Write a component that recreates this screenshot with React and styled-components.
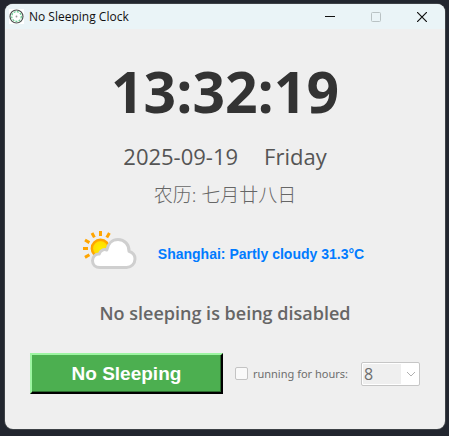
import React, { useState } from "react";
import styled, { createGlobalStyle } from "styled-components";

const ui = `"Open Sans", "Noto Sans", "Noto Sans CJK SC", sans-serif`;
const arial = `"Liberation Sans", Arial, sans-serif`;

const GlobalStyle = createGlobalStyle`
  *, *::before, *::after { box-sizing: border-box; }
  body { margin: 0; background: #22262f; font-family: ${ui}; }
`;

const Desktop = styled.div`
  min-height: 100vh;
  display: flex;
  padding: 4px 4px 7px 5px;
`;

const Window = styled.main`
  flex: 1;
  display: flex;
  flex-direction: column;
  overflow: hidden;
  border-radius: 8px;
  background: #efefef;
  box-shadow: 0 0 0 1px #3d4146;
`;

const TitleBar = styled.header`
  display: flex;
  align-items: center;
  height: 25px;
  padding-left: 4px;
  background: #eaf4f7;
`;

const Title = styled.h1`
  flex: 1;
  margin: 0 0 0 5px;
  font: 400 12px/16px ${ui};
  color: #111;
`;

const WindowButton = styled.button`
  display: grid;
  place-items: center;
  width: 46px;
  height: 24px;
  padding: 0;
  border: 0;
  background: transparent;
  color: #111;
  &:disabled { color: #b9c2c4; }
`;

const Content = styled.div`
  flex: 1;
  display: flex;
  flex-direction: column;
  align-items: center;
  padding: 22px 25px 0;
`;

const Time = styled.time`
  font: 700 57px/80px ${ui};
  color: #333;
`;

const DateLine = styled.div`
  display: flex;
  gap: 26px;
  margin-top: 9px;
  font-size: 22px;
  line-height: 32px;
  color: #555;
`;

const Lunar = styled.div`
  margin-top: 5px;
  font: 300 19px/36px "Noto Sans", "Noto Sans CJK SC", sans-serif;
  color: #666;
`;

const Weather = styled.div`
  display: flex;
  align-items: center;
  gap: 20px;
  margin-top: 17px;
`;

const WeatherText = styled.span`
  padding: 6px 4px 0 0;
  font: 700 14px/20px ${arial};
  color: #007bff;
`;

const Status = styled.p`
  margin: 27px 0 0;
  font: 600 18px/28px ${ui};
  color: #666;
`;

const Controls = styled.div`
  align-self: stretch;
  display: flex;
  align-items: center;
  margin-top: 26px;
`;

const SleepButton = styled.button`
  flex: 1;
  height: 41px;
  padding: 0;
  border: 2px solid;
  border-color: #9df5a2 #000 #000 #9df5a2;
  background: #4caf50;
  box-shadow: inset -1px -1px 0 #2b6b2e;
  font: 700 19px/24px ${arial};
  color: #fff;
`;

const CheckLabel = styled.label`
  display: flex;
  align-items: center;
  gap: 5px;
  margin-left: 12px;
  font: 400 11px/16px "Noto Sans", sans-serif;
  white-space: nowrap;
  color: #6d6d6d;
`;

const CheckBox = styled.input`
  appearance: none;
  width: 13px;
  height: 13px;
  margin: 0;
  border: 1px solid #c3c3c3;
  border-radius: 2px;
  background: #f9f9f9;
  &:checked { background: #007bff; }
`;

const SelectBox = styled.div`
  position: relative;
  width: 59px;
  margin-left: 13px;
`;

const HourSelect = styled.select`
  appearance: none;
  display: block;
  width: 100%;
  height: 24px;
  padding: 0 20px 0 2px;
  border: 1px solid #c6c6c6;
  border-radius: 2px;
  background: linear-gradient(#efefef, #efefef) 1px 1px / 38px 20px no-repeat #fff;
  font: 400 16px/22px ${ui};
  color: #6d6d6d;
  opacity: 1;
`;

const Chevron = styled.svg`
  position: absolute;
  right: 4px;
  top: 9px;
  pointer-events: none;
`;

function ClockIcon() {
  return (
    <svg width="15" height="15" viewBox="0 0 15 15" fill="none" aria-hidden="true">
      <rect width="15" height="15" fill="#fff" />
      <circle cx="7.5" cy="7.5" r="6.5" stroke="#4f5553" strokeWidth="1.2" />
      <circle cx="7.5" cy="7.5" r="4.8" stroke="#5fc98a" strokeWidth="1.2" strokeDasharray="2 1.2" />
      <circle cx="7.5" cy="7.5" r="0.9" fill="#999" />
    </svg>
  );
}

function WeatherIcon() {
  return (
    <svg width="56" height="42" viewBox="0 0 56 42" aria-hidden="true">
      <defs>
        <radialGradient id="sun">
          <stop offset="0" stopColor="#ffee00" />
          <stop offset="0.75" stopColor="#ffdf00" />
          <stop offset="1" stopColor="#ffc400" />
        </radialGradient>
      </defs>
      <g stroke="#ffa500" strokeWidth="3">
        <path d="M18.5 1v5M10 3l2.4 4.4M27.4 3l-2.6 4.4M3 10l4.4 2.6M1 18.5h5M3 27.4l4.4-2.6" />
      </g>
      <circle cx="18.5" cy="18.5" r="8.7" fill="url(#sun)" stroke="#ffa500" strokeWidth="2.4" />
      <path
        d="M18 37.5C13.4 37.5 10.5 34.5 10.5 30.8C10.5 26.7 13.5 23.8 17.3 24C18 20.7 21.5 18.8 24.8 20C26 13.5 30.5 9.5 36 9.5C42.5 9.5 47.3 14.5 47 21.3C50.8 22.5 53 25.5 53 29C53 33.8 49.3 37.5 44.5 37.5Z"
        fill="#fff"
        stroke="#cfcfcf"
        strokeWidth="3"
        strokeLinejoin="round"
      />
    </svg>
  );
}

export default function App() {
  const [limited, setLimited] = useState(false);
  return (
    <>
      <GlobalStyle />
      <Desktop>
        <Window>
          <TitleBar>
            <ClockIcon />
            <Title>No Sleeping Clock</Title>
            <WindowButton aria-label="Minimize">
              <svg width="10" height="10" stroke="currentColor"><path d="M0 4.5H10" /></svg>
            </WindowButton>
            <WindowButton aria-label="Maximize" disabled>
              <svg width="10" height="10" fill="none" stroke="currentColor"><rect x="0.5" y="0.5" width="9" height="9" rx="1" /></svg>
            </WindowButton>
            <WindowButton aria-label="Close">
              <svg width="10" height="10" stroke="currentColor" strokeWidth="1.2"><path d="M0 0L10 10M10 0L0 10" /></svg>
            </WindowButton>
          </TitleBar>
          <Content>
            <Time>13:32:19</Time>
            <DateLine>
              <span>2025-09-19</span>
              <span>Friday</span>
            </DateLine>
            <Lunar lang="zh-CN">农历: 七月廿八日</Lunar>
            <Weather>
              <WeatherIcon />
              <WeatherText>Shanghai: Partly cloudy 31.3°C</WeatherText>
            </Weather>
            <Status>No sleeping is being disabled</Status>
            <Controls>
              <SleepButton>No Sleeping</SleepButton>
              <CheckLabel>
                <CheckBox type="checkbox" checked={limited} onChange={(e) => setLimited(e.target.checked)} />
                running for hours:
              </CheckLabel>
              <SelectBox>
                <HourSelect aria-label="Hours" defaultValue="8" disabled>
                  {[1, 2, 4, 8, 12].map((h) => <option key={h}>{h}</option>)}
                </HourSelect>
                <Chevron width="10" height="6" fill="none" stroke="#b0b0b0">
                  <path d="M1 1L5 5L9 1" />
                </Chevron>
              </SelectBox>
            </Controls>
          </Content>
        </Window>
      </Desktop>
    </>
  );
}
